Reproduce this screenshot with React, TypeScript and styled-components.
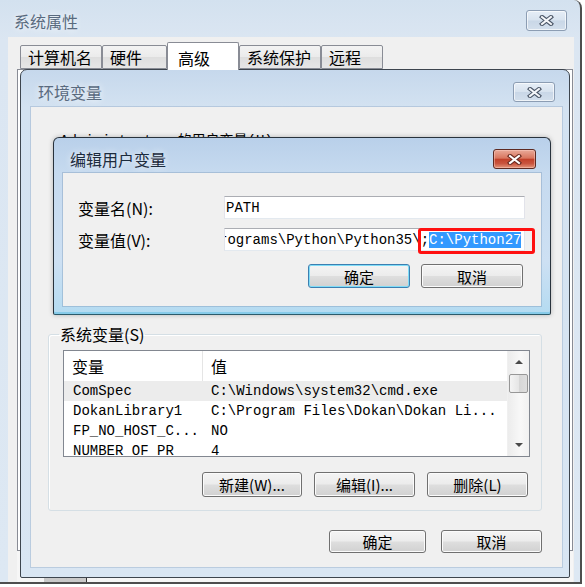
import React from "react";
import styled, { createGlobalStyle } from "styled-components";

const CJK = `"Noto Sans CJK SC", "Noto Sans", sans-serif`;
const MONO = `"Liberation Mono", "Noto Sans CJK SC", monospace`;

const GlobalStyle = createGlobalStyle`
  html, body { margin: 0; padding: 0; background: #ffffff; }
  body { font-family: ${CJK}; }
  * { box-sizing: border-box; }
`;

const Screen = styled.div`
  position: relative;
  width: 585px;
  height: 587px;
  overflow: hidden;
  background: #ffffff;
`;

/* ---------- generic window parts ---------- */

const TitleBar = styled.div<{ $h: number; $pt: number; $pl: number; $pr: number }>`
  flex: none;
  height: ${(p) => p.$h}px;
  padding: ${(p) => p.$pt}px ${(p) => p.$pr}px 0 ${(p) => p.$pl}px;
  display: flex;
  align-items: center;
  justify-content: space-between;
`;

const WindowTitle = styled.span<{ $active?: boolean }>`
  font-family: ${CJK};
  font-size: 16px;
  line-height: 20px;
  color: ${(p) => (p.$active ? "#1c2b3d" : "#596a7e")};
  text-shadow: 0 0 7px rgba(255, 255, 255, 0.95);
`;

const CloseButton = styled.div<{ $w: number; $h: number; $red?: boolean }>`
  width: ${(p) => p.$w}px;
  height: ${(p) => p.$h}px;
  border-radius: 3px;
  display: flex;
  align-items: center;
  justify-content: center;
  border: 1px solid ${(p) => (p.$red ? "#5d2a22" : "#8c9db3")};
  background: ${(p) =>
    p.$red
      ? "linear-gradient(#e9aa99 0%, #d9765f 45%, #c2412a 52%, #c9543e 75%, #e3957b 100%)"
      : "linear-gradient(#e6eef7 0%, #d8e3ef 48%, #c9d7e7 52%, #d3dfec 100%)"};
  box-shadow: inset 0 0 0 1px ${(p) => (p.$red ? "rgba(255,210,200,0.45)" : "rgba(255,255,255,0.65)")};
`;

const CloseGlyph: React.FC<{ red?: boolean }> = ({ red }) => (
  <svg width="15" height="11" viewBox="0 0 15 11">
    <path d="M3 2 L12 9 M12 2 L3 9" stroke={red ? "#6a2a20" : "#4a5566"} strokeWidth="4.2" strokeLinecap="square" fill="none" />
    <path d="M3 2 L12 9 M12 2 L3 9" stroke={red ? "#ffffff" : "#f4f6f9"} strokeWidth="2" strokeLinecap="square" fill="none" />
  </svg>
);

const PushButton = styled.div<{ $w: number; $h: number; $default?: boolean }>`
  width: ${(p) => p.$w}px;
  height: ${(p) => p.$h}px;
  flex: none;
  display: flex;
  align-items: center;
  justify-content: center;
  font-family: ${CJK};
  font-size: 15px;
  color: #000;
  border: 1px solid ${(p) => (p.$default ? "#3c7fb1" : "#707070")};
  border-radius: 3px;
  background: linear-gradient(#f4f4f4 0%, #ececec 48%, #dedede 52%, #d1d1d1 100%);
  box-shadow: inset 0 0 0 1px ${(p) => (p.$default ? "#7fdcf7" : "#fbfbfb")};
`;

/* ---------- outer window: 系统属性 ---------- */

const OuterWindow = styled.div`
  position: absolute;
  left: 0;
  top: 0;
  width: 582px;
  height: 584px;
  display: flex;
  flex-direction: column;
  padding: 0 6px 0 8px;
  background: linear-gradient(#d3e1ef 0px, #dbe6f2 40px, #dde8f3 100%);
  border-right: 2px solid #4e4e4e;
  border-bottom: 2px solid #4e4e4e;
  border-top-right-radius: 8px;
`;

const OuterClient = styled.div`
  flex: 1;
  display: flex;
  flex-direction: column;
  background: #f0f0f0;
  padding: 5px 1px 0 9px;
`;

const TabStrip = styled.div`
  height: 27px;
  display: flex;
  align-items: flex-end;
  padding-left: 3px;
`;

const Tab = styled.div<{ $w: number; $selected?: boolean }>`
  width: ${(p) => p.$w}px;
  height: ${(p) => (p.$selected ? 28 : 24)}px;
  margin-bottom: ${(p) => (p.$selected ? -1 : 0)}px;
  position: relative;
  z-index: ${(p) => (p.$selected ? 1 : 0)};
  padding: ${(p) => (p.$selected ? "3px 0 0 10px" : "0 0 0 7px")};
  display: flex;
  align-items: center;
  font-family: ${CJK};
  font-size: 16px;
  color: #000;
  border: 1px solid #898c95;
  border-bottom: ${(p) => (p.$selected ? "none" : "1px solid #898c95")};
  border-radius: 2px 2px 0 0;
  background: ${(p) => (p.$selected ? "#ffffff" : "linear-gradient(#f3f3f3, #ebebeb 50%, #dedede 51%, #e6e6e6)")};
`;

const TabPanel = styled.div`
  flex: 1;
  border: 1px solid #898c95;
  background: #ffffff;
`;

const OuterFooter = styled.div`
  height: 31px;
  display: flex;
  align-items: flex-end;
  padding-left: 27px;
  background: #f6f6f6;
`;

const FooterStub = styled.div`
  width: 43px;
  height: 5px;
  background: #c9c9c9;
  border-right: 1px solid #333;
`;

/* ---------- 环境变量 window ---------- */

const EnvWindow = styled.div`
  position: absolute;
  left: 20px;
  top: 69px;
  width: 550px;
  height: 509px;
  display: flex;
  flex-direction: column;
  padding: 0 7px 10px 10px;
  border: 1px solid #3d454e;
  border-radius: 7px 7px 2px 2px;
  background: linear-gradient(#c6d8ec 0px, #d3e2f1 37px, #d9e6f3 100%);
`;

const EnvClient = styled.div`
  flex: 1;
  display: flex;
  flex-direction: column;
  background: #f0f0f0;
  padding: 25px 20px 14px 17px;
  box-shadow: 0 0 0 1px rgba(130, 155, 185, 0.35);
`;

const UserLabel = styled.div`
  height: 18px;
  margin-left: 12px;
  font-family: ${MONO};
  font-size: 14px;
  line-height: 18px;
  color: #000;
  white-space: nowrap;
`;

const UserArea = styled.div`
  flex: 1;
`;

const GroupBox = styled.fieldset`
  margin: 0;
  min-width: 0;
  padding: 7px 12px 13px 12px;
  border: 1px solid #d5dfe5;
  border-radius: 3px;
  box-shadow: inset 1px 1px 0 #ffffff;
`;

const GroupLegend = styled.legend`
  margin-left: -2px;
  padding: 0 1px;
  font-family: ${CJK};
  font-size: 16px;
  line-height: 18px;
  color: #000;
`;

const ListBox = styled.div`
  width: 467px;
  height: 107px;
  margin-left: 2px;
  display: flex;
  border: 1px solid #828790;
  background: #ffffff;
  overflow: hidden;
`;

const ListMain = styled.div`
  flex: 1;
  display: flex;
  flex-direction: column;
  overflow: hidden;
`;

const ListHeader = styled.div`
  flex: none;
  height: 30px;
  display: grid;
  grid-template-columns: 139px 1fr;
  align-items: center;
  font-family: ${CJK};
  font-size: 16px;
  color: #000;
`;

const HeaderCell = styled.div<{ $divider?: boolean }>`
  height: 100%;
  display: flex;
  align-items: center;
  padding-left: 8px;
  border-right: ${(p) => (p.$divider ? "1px solid #e5e5e5" : "none")};
`;

const ListRow = styled.div<{ $selected?: boolean }>`
  flex: none;
  height: 20px;
  display: grid;
  grid-template-columns: 139px 1fr;
  align-items: center;
  background: ${(p) => (p.$selected ? "#ececec" : "transparent")};
  font-family: ${MONO};
  font-size: 14px;
  color: #000;
  white-space: nowrap;
`;

const RowCell = styled.div<{ $pl: number }>`
  padding-left: ${(p) => p.$pl}px;
  overflow: hidden;
`;

const ScrollBar = styled.div`
  width: 22px;
  flex: none;
  display: flex;
  flex-direction: column;
  background: linear-gradient(90deg, #ececec, #f8f8f8 60%, #f1f1f1);
  border-left: 1px solid #f0f0f0;
`;

const ArrowBox = styled.div`
  height: 22px;
  flex: none;
  display: flex;
  align-items: center;
  justify-content: center;
`;

const Arrow = styled.div<{ $down?: boolean }>`
  width: 0;
  height: 0;
  border-left: 4px solid transparent;
  border-right: 4px solid transparent;
  ${(p) => (p.$down ? "border-top: 4px solid #4a4a4a;" : "border-bottom: 4px solid #4a4a4a;")}
`;

const Thumb = styled.div`
  height: 19px;
  margin: 1px 1px 0 1px;
  flex: none;
  border: 1px solid #979797;
  border-radius: 2px;
  background: linear-gradient(90deg, #f4f4f4, #e6e6e6 50%, #d6d6d6 51%, #dedede);
`;

const Track = styled.div`
  flex: 1;
`;

const ButtonRow = styled.div<{ $mt: number; $gap: number; $mr?: number }>`
  margin-top: ${(p) => p.$mt}px;
  margin-right: ${(p) => p.$mr ?? 0}px;
  display: flex;
  justify-content: flex-end;
  gap: ${(p) => p.$gap}px;
`;

/* ---------- 编辑用户变量 window ---------- */

const EditWindow = styled.div`
  position: absolute;
  left: 53px;
  top: 137px;
  width: 498px;
  height: 178px;
  display: flex;
  flex-direction: column;
  padding: 0 9px 8px 9px;
  border: 1px solid #28323c;
  border-bottom-color: #2b5a6a;
  border-radius: 6px 6px 2px 2px;
  background: linear-gradient(#b9d0ea 0px, #c6daef 35px, #cde0f3 70%, #b4dbf1 100%);
  box-shadow: inset 0 -2px 0 #86cbe9, 0 0 5px rgba(0, 0, 0, 0.25);
`;

const EditClient = styled.div`
  flex: 1;
  display: grid;
  grid-template-columns: 146px 1fr;
  grid-template-rows: 23px 23px 24px;
  row-gap: 9px;
  align-items: center;
  padding: 23px 16px 14px 15px;
  background: #f0f0f0;
  box-shadow: 0 0 0 1px rgba(110, 140, 175, 0.35);
`;

const FieldLabel = styled.div`
  font-family: ${CJK};
  font-size: 16px;
  line-height: 20px;
  color: #000;
  white-space: nowrap;
`;

const FieldWrap = styled.div`
  position: relative;
  height: 23px;
`;

const TextBox = styled.div`
  height: 23px;
  display: flex;
  align-items: center;
  padding-left: 1px;
  background: #ffffff;
  border: 1px solid #e2e3ea;
  border-top-color: #abadb3;
  border-bottom-color: #e3e9ef;
  overflow: hidden;
  font-family: ${MONO};
  font-size: 14px;
  line-height: 16px;
  color: #000;
  white-space: nowrap;
`;

const ScrolledText = styled.span<{ $shift: number }>`
  margin-left: ${(p) => -p.$shift}px;
`;

const Selection = styled.span`
  background: #3399ff;
  color: #ffffff;
`;

const Annotation = styled.div`
  position: absolute;
  left: 194px;
  top: 0;
  width: 117px;
  height: 26px;
  border: 3px solid #ff1010;
  border-radius: 3px;
  pointer-events: none;
`;

const EditButtons = styled(ButtonRow)`
  grid-column: 1 / -1;
  justify-self: end;
`;

/* ---------- data ---------- */

const tabs = [
  { label: "计算机名", w: 82 },
  { label: "硬件", w: 65 },
  { label: "高级", w: 72, selected: true },
  { label: "系统保护", w: 82 },
  { label: "远程", w: 62 },
];

const sysVars = [
  { name: "ComSpec", value: "C:\\Windows\\system32\\cmd.exe", selected: true },
  { name: "DokanLibrary1", value: "C:\\Program Files\\Dokan\\Dokan Li..." },
  { name: "FP_NO_HOST_C...", value: "NO" },
  { name: "NUMBER_OF_PR", value: "4" },
];

export default function App() {
  return (
    <>
      <GlobalStyle />
      <Screen>
        <OuterWindow>
          <TitleBar $h={37} $pt={4} $pl={6} $pr={7}>
            <WindowTitle>系统属性</WindowTitle>
            <CloseButton $w={41} $h={21}>
              <CloseGlyph />
            </CloseButton>
          </TitleBar>
          <OuterClient>
            <TabStrip>
              {tabs.map((t) => (
                <Tab key={t.label} $w={t.w} $selected={t.selected}>
                  {t.label}
                </Tab>
              ))}
            </TabStrip>
            <TabPanel />
            <OuterFooter>
              <FooterStub />
            </OuterFooter>
          </OuterClient>
        </OuterWindow>

        <EnvWindow>
          <TitleBar $h={37} $pt={7} $pl={7} $pr={7}>
            <WindowTitle>环境变量</WindowTitle>
            <CloseButton $w={42} $h={20}>
              <CloseGlyph />
            </CloseButton>
          </TitleBar>
          <EnvClient>
            <UserLabel>Administrator 的用户变量(U)</UserLabel>
            <UserArea />
            <GroupBox>
              <GroupLegend>系统变量(S)</GroupLegend>
              <ListBox>
                <ListMain>
                  <ListHeader>
                    <HeaderCell $divider>变量</HeaderCell>
                    <HeaderCell>值</HeaderCell>
                  </ListHeader>
                  {sysVars.map((v) => (
                    <ListRow key={v.name} $selected={v.selected}>
                      <RowCell $pl={9}>{v.name}</RowCell>
                      <RowCell $pl={8}>{v.value}</RowCell>
                    </ListRow>
                  ))}
                </ListMain>
                <ScrollBar>
                  <ArrowBox>
                    <Arrow />
                  </ArrowBox>
                  <Thumb />
                  <Track />
                  <ArrowBox>
                    <Arrow $down />
                  </ArrowBox>
                </ScrollBar>
              </ListBox>
              <ButtonRow $mt={15} $gap={12} $mr={1}>
                <PushButton $w={100} $h={25}>新建(W)...</PushButton>
                <PushButton $w={101} $h={25}>编辑(I)...</PushButton>
                <PushButton $w={101} $h={25}>删除(L)</PushButton>
              </ButtonRow>
            </GroupBox>
            <ButtonRow $mt={19} $gap={15}>
              <PushButton $w={97} $h={23}>确定</PushButton>
              <PushButton $w={101} $h={23}>取消</PushButton>
            </ButtonRow>
          </EnvClient>
        </EnvWindow>

        <EditWindow>
          <TitleBar $h={35} $pt={7} $pl={7} $pr={5}>
            <WindowTitle $active>编辑用户变量</WindowTitle>
            <CloseButton $w={43} $h={20} $red>
              <CloseGlyph red />
            </CloseButton>
          </TitleBar>
          <EditClient>
            <FieldLabel>变量名(N):</FieldLabel>
            <FieldWrap>
              <TextBox>
                <ScrolledText $shift={0}>PATH</ScrolledText>
              </TextBox>
            </FieldWrap>
            <FieldLabel>变量值(V):</FieldLabel>
            <FieldWrap>
              <TextBox>
                <ScrolledText $shift={7}>
                  rograms\Python\Python35\;<Selection>C:\Python27</Selection>
                </ScrolledText>
              </TextBox>
              <Annotation />
            </FieldWrap>
            <EditButtons $mt={8} $gap={11} $mr={2}>
              <PushButton $w={102} $h={24} $default>
                确定
              </PushButton>
              <PushButton $w={102} $h={24}>
                取消
              </PushButton>
            </EditButtons>
          </EditClient>
        </EditWindow>
      </Screen>
    </>
  );
}
